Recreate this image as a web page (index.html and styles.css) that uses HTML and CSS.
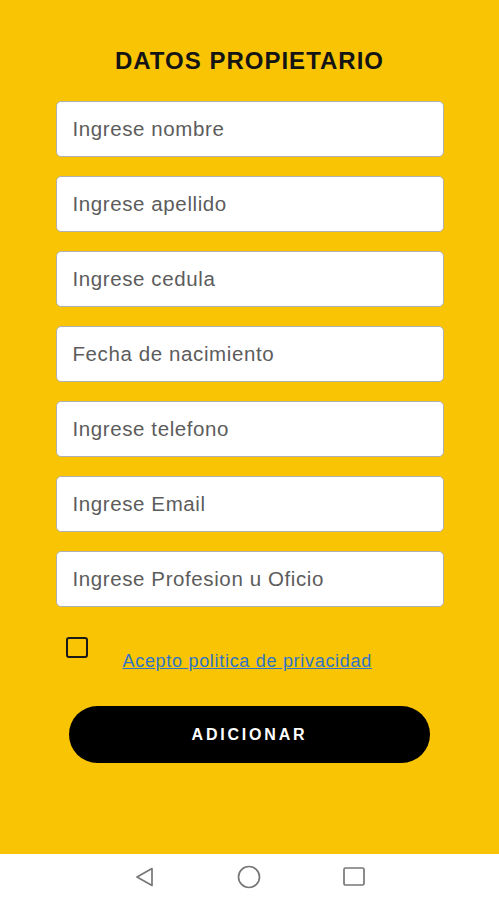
FILE: index.html
```html
<!DOCTYPE html>
<html lang="es">
<head>
    <meta charset="UTF-8">
    <meta name="viewport" content="width=device-width, initial-scale=1.0">
    <title>Datos Propietario</title>
    <link rel="stylesheet" href="styles.css">
</head>
<body>

    <div class="screen">
        <h2 class="title">DATOS PROPIETARIO</h2>

        <div class="form">
            <input type="text" class="field" placeholder="Ingrese nombre">
            <input type="text" class="field" placeholder="Ingrese apellido">
            <input type="text" class="field" placeholder="Ingrese cedula">
            <input type="text" class="field" placeholder="Fecha de nacimiento">
            <input type="text" class="field" placeholder="Ingrese telefono">
            <input type="text" class="field" placeholder="Ingrese Email">
            <input type="text" class="field" placeholder="Ingrese Profesion u Oficio">
        </div>

        <div class="privacy">
            <span class="check"></span>
            <a href="#" class="privacy-link">Acepto politica de privacidad</a>
        </div>

        <button class="btn">ADICIONAR</button>
    </div>

    <div class="navbar">
        <svg class="nav-icon" width="22" height="22" viewBox="0 0 22 22">
            <path d="M18 2.5 L3 11 L18 19.5 Z" fill="none" stroke="#777" stroke-width="1.7" stroke-linejoin="round"/>
        </svg>
        <svg class="nav-icon" width="26" height="26" viewBox="0 0 26 26">
            <circle cx="13" cy="13" r="10.5" fill="none" stroke="#777" stroke-width="1.7"/>
        </svg>
        <svg class="nav-icon" width="24" height="24" viewBox="0 0 24 24">
            <rect x="2" y="3" width="20" height="17" rx="1.5" fill="none" stroke="#777" stroke-width="1.7"/>
        </svg>
    </div>

</body>
</html>
```

FILE: styles.css
```css
body {
    margin: 0;
    font-family: 'Liberation Sans', Arial, sans-serif;
    background-color: #fff;
}

.screen {
    height: 854px;
    background-color: #f9c404;
    display: flex;
    flex-direction: column;
    align-items: center;
    box-sizing: border-box;
    padding-top: 47px;
}

.title {
    margin: 0;
    font-size: 24px;
    line-height: 28px;
    font-weight: bold;
    color: #141414;
    letter-spacing: 1px;
}

.form {
    margin-top: 26px;
    display: flex;
    flex-direction: column;
    gap: 19px;
}

.field {
    width: 388px;
    height: 56px;
    box-sizing: border-box;
    padding: 0 16px;
    border: 1px solid #b0b0b0;
    border-radius: 5px;
    background: white;
    font-family: 'Liberation Sans', Arial, sans-serif;
    font-size: 20.5px;
    letter-spacing: 0.6px;
    color: #333;
    outline: none;
}

.field::placeholder {
    color: #5c5c5c;
}

.privacy {
    width: 388px;
    margin-top: 30px;
    display: flex;
    align-items: flex-start;
}

.check {
    width: 22px;
    height: 21px;
    margin-left: 10px;
    box-sizing: border-box;
    border: 2px solid #1a1a1a;
    border-radius: 3px;
}

.privacy-link {
    margin-left: 35px;
    margin-top: 13px;
    font-size: 18px;
    line-height: 22px;
    letter-spacing: 0.7px;
    color: #2f74c6;
}

.btn {
    width: 361px;
    height: 57px;
    margin-top: 34px;
    background-color: #000;
    color: white;
    border: none;
    border-radius: 29px;
    font-family: 'Liberation Sans', Arial, sans-serif;
    font-size: 16px;
    font-weight: bold;
    letter-spacing: 2.8px;
    cursor: pointer;
}

.navbar {
    height: 46px;
    display: flex;
    align-items: center;
    justify-content: center;
    gap: 80px;
    background: #fff;
}
```
